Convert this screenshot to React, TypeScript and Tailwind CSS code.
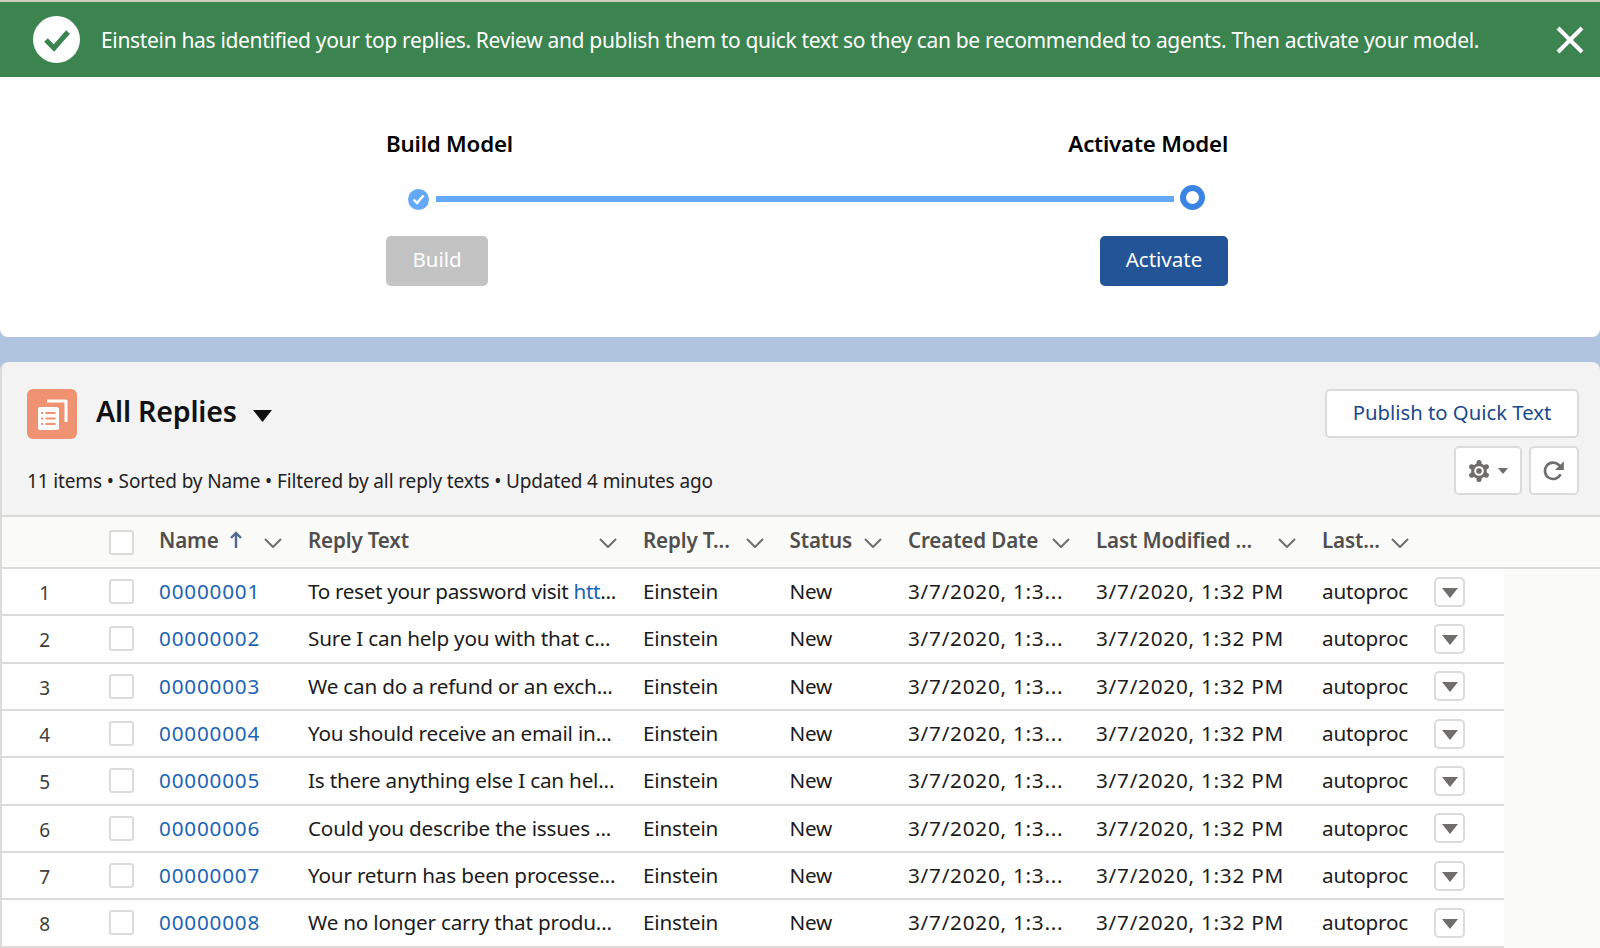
const rows = [
    { id: '00000001', text: 'To reset your password visit ', link: 'htt', rest: '...' },
    { id: '00000002', text: 'Sure I can help you with that c...' },
    { id: '00000003', text: 'We can do a refund or an exch...' },
    { id: '00000004', text: 'You should receive an email in...' },
    { id: '00000005', text: 'Is there anything else I can hel...' },
    { id: '00000006', text: 'Could you describe the issues ...' },
    { id: '00000007', text: 'Your return has been processe...' },
    { id: '00000008', text: 'We no longer carry that produ...' },
];

const gridCols = 'grid grid-cols-[107px_50px_149px_335px_146.5px_118.5px_188px_226px_113px_69px]';

function Chevron() {
    return (
        <svg width="18" height="10" viewBox="0 0 18 10" className="mt-[3px] shrink-0">
            <path d="M1 1l8 8 8-8" fill="none" stroke="#706e6b" strokeWidth="2" />
        </svg>
    );
}

function Checkbox() {
    return <span className="block h-[25px] w-[25px] rounded-[3px] border-2 border-[#dddbda] bg-white" />;
}

function HeaderCell({ label, sorted }: { label: string; sorted?: boolean }) {
    return (
        <div className="flex items-center justify-between pr-[26px]">
            <span className="-mt-[3px] flex items-center gap-[10px] text-[20.6px] font-semibold tracking-[-0.15px] text-[#514f4d]">
                {label}
                {sorted && (
                    <svg width="14" height="18" viewBox="0 0 14 18">
                        <path d="M7 17V3M2 7l5-5 5 5" fill="none" stroke="#4f6a92" strokeWidth="2.4" />
                    </svg>
                )}
            </span>
            <Chevron />
        </div>
    );
}

function Row({ row, index }: { row: (typeof rows)[number]; index: number }) {
    return (
        <div className={`${gridCols} h-[47.33px] w-[1502px] items-center border-b-2 border-[#dddbda] bg-white text-[20.7px] tracking-[-0.2px] whitespace-nowrap text-[#1c1c1c]`}>
            <span className="mt-[3px] pr-[22px] text-center text-[19px] text-[#3e3e3c]">{index + 1}</span>
            <Checkbox />
            <a className="tracking-[0.8px] text-[#1b64b5]">{row.id}</a>
            <span className={row.link ? 'tracking-[-0.33px]' : ''}>
                {row.text}
                {row.link && <span className="text-[#1b64b5]">{row.link}</span>}
                {row.rest}
            </span>
            <span>Einstein</span>
            <span>New</span>
            <span className="tracking-[0.76px]">3/7/2020, 1:3...</span>
            <span className="tracking-[0.76px]">3/7/2020, 1:32 PM</span>
            <span>autoproc</span>
            <button className="-ml-[1px] flex h-[30px] w-[31px] items-center justify-center rounded-[5px] border-2 border-[#dddbda] bg-white">
                <svg width="16" height="10" viewBox="0 0 16 10" className="mt-[2px]">
                    <path d="M0 0h16L8 10z" fill="#706e6b" />
                </svg>
            </button>
        </div>
    );
}

export default function App() {
    return (
        <div className="h-[948px] w-[1600px] overflow-hidden bg-[#b0c4df] [font-family:'Noto_Sans',sans-serif]">
            <div className="bg-white">
                <div className="h-[2px] bg-[#cfcdb8]" />
                <div className="flex h-[75px] items-center bg-[#3b8450] pr-[16px] pl-[33px] text-white">
                    <span className="flex h-[47px] w-[47px] items-center justify-center rounded-full bg-white">
                        <svg width="28" height="24" viewBox="0 0 28 24">
                            <path d="M3 12l8 8L25 4" fill="none" stroke="#3b8450" strokeWidth="5" />
                        </svg>
                    </span>
                    <span className="mt-[2px] ml-[21px] flex-1 text-[21px] tracking-[-0.33px] whitespace-nowrap">
                        Einstein has identified your top replies. Review and publish them to quick text so they can be recommended to agents. Then activate your model.
                    </span>
                    <svg width="28" height="28" viewBox="0 0 28 28">
                        <path d="M2 2l24 24M26 2L2 26" fill="none" stroke="#fff" strokeWidth="4" />
                    </svg>
                </div>
            </div>

            <div className="h-[260px] rounded-b-[8px] bg-white pt-[52px]">
                <div className="ml-[386px] w-[842px]">
                    <div className="flex h-[30px] items-center justify-between text-[22.3px] font-semibold tracking-[-0.2px] text-black">
                        <span>Build Model</span>
                        <span>Activate Model</span>
                    </div>
                    <div className="mt-[26px] flex h-[26px] items-start px-[22px]">
                        <span className="mt-[4px] flex h-[21px] w-[21px] items-center justify-center rounded-full bg-[#64a9f8]">
                            <svg width="13" height="11" viewBox="0 0 13 11">
                                <path d="M1.5 5.5l3.500 3.500 6.500-7.500" fill="none" stroke="#fff" strokeWidth="2.4" />
                            </svg>
                        </span>
                        <span className="mt-[11px] ml-[7px] h-[6px] w-[738px] bg-[#64a9f8]" />
                        <span className="ml-[6px] h-[25px] w-[25px] rounded-full border-[6px] border-[#3a84e6] bg-white" />
                    </div>
                    <div className="mt-[25px] flex justify-between">
                        <button className="h-[50px] w-[102px] rounded-[5px] bg-[#c3c3c3] pb-[4px] text-[20.5px] text-white">Build</button>
                        <button className="h-[50px] w-[128px] rounded-[5px] bg-[#235497] pb-[4px] text-[20.5px] text-white">Activate</button>
                    </div>
                </div>
            </div>

            <div className="mt-[25px] rounded-t-[8px] border-l-2 border-[#dddbda] bg-[#f3f3f3]">
                <div className="flex h-[153px] flex-col pt-[27px] pr-[21px] pl-[25px]">
                    <div className="flex items-start">
                        <svg width="50" height="50" viewBox="0 0 50 50" className="shrink-0">
                            <rect width="50" height="50" rx="6" fill="#ef9272" />
                            <path d="M20 12h19v21" fill="none" stroke="#fff" strokeWidth="3" strokeLinejoin="round" />
                            <rect x="11" y="18" width="21" height="23" rx="2" fill="#fff" />
                            <path d="M14 24h2M14 29.500h2M14 35h2M18.500 24h10M18.500 29.500h10M18.500 35h10" stroke="#ef9272" strokeWidth="2" />
                        </svg>
                        <span className="-mt-[3px] ml-[19px] h-[50px] text-[28.6px] leading-[50px] font-semibold tracking-[-0.2px] text-[#111]">All Replies</span>
                        <svg width="19" height="12" viewBox="0 0 19 12" className="mt-[21px] ml-[16px]">
                            <path d="M0 0h19L9.500 12z" fill="#111" />
                        </svg>
                        <button className="ml-auto h-[49px] w-[254px] rounded-[5px] border-2 border-[#dddbda] bg-white pb-[2px] text-[20.3px] text-[#1b4a8a]">
                            Publish to Quick Text
                        </button>
                    </div>
                    <div className="mt-[7px] flex items-start">
                        <span className="mt-[23px] h-[24px] text-[19px] leading-[24px] tracking-[-0.13px] text-[#222]">
                            11 items • Sorted by Name • Filtered by all reply texts • Updated 4 minutes ago
                        </span>
                        <button className="ml-auto flex h-[49px] w-[68px] items-center justify-center gap-[8px] rounded-[5px] border-2 border-[#dddbda] bg-white">
                            <svg width="22" height="22" viewBox="0 0 22 22">
                                <circle cx="11" cy="11" r="7.800" fill="#706e6b" />
                                <path d="M11 2.500v3M11 16.500v3M18.400 6.750l-2.600 1.500M3.600 15.250l2.600-1.500M18.400 15.250l-2.600-1.500M3.600 6.750l2.600 1.500" stroke="#706e6b" strokeWidth="5" strokeLinecap="round" />
                                <circle cx="11" cy="11" r="4.800" fill="#fff" />
                                <circle cx="11" cy="11" r="2.800" fill="#706e6b" />
                            </svg>
                            <svg width="10" height="6" viewBox="0 0 10 6">
                                <path d="M0 0h10L5 6z" fill="#706e6b" />
                            </svg>
                        </button>
                        <button className="ml-[7px] flex h-[49px] w-[50px] items-center justify-center rounded-[5px] border-2 border-[#dddbda] bg-white">
                            <svg width="24" height="24" viewBox="0 0 22 22">
                                <path d="M17 14a7.500 7.500 0 1 1-1.500-8.500L18 8" fill="none" stroke="#706e6b" strokeWidth="2.400" />
                                <path d="M20 2v8h-8z" fill="#706e6b" />
                            </svg>
                        </button>
                    </div>
                </div>
                <div className="h-[440px] bg-[#fafaf9]">
                    <div className={`${gridCols} h-[54px] items-center border-y-2 border-[#dddbda] bg-[#fafaf9]`}>
                        <span />
                        <Checkbox />
                        <HeaderCell label="Name" sorted />
                        <HeaderCell label="Reply Text" />
                        <HeaderCell label="Reply T..." />
                        <HeaderCell label="Status" />
                        <HeaderCell label="Created Date" />
                        <HeaderCell label="Last Modified ..." />
                        <HeaderCell label="Last..." />
                    </div>
                    {rows.map((row, i) => (
                        <Row key={row.id} row={row} index={i} />
                    ))}
                </div>
            </div>
        </div>
    );
}
